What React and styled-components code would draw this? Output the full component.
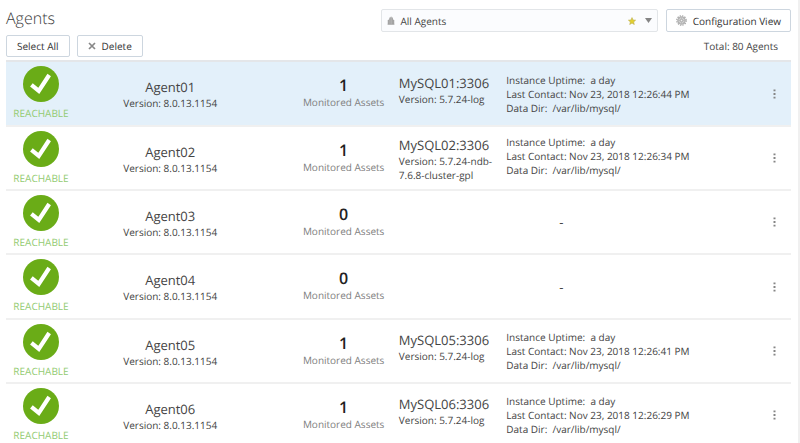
import React from "react";
import styled, { createGlobalStyle } from "styled-components";

const GlobalStyle = createGlobalStyle`
  * { box-sizing: border-box; }
  body {
    margin: 0;
    background: #fff;
    color: #444;
    font-family: "Open Sans", "Noto Sans", sans-serif;
    font-size: 10px;
    text-rendering: geometricPrecision;
  }
  button, select { font-family: inherit; text-rendering: inherit; }
`;

const Page = styled.main`
  height: 100vh;
  overflow: hidden;
  padding: 9px 7px 0 6px;
  border-right: 2px solid #f0f0f0;
`;

const Bar = styled.div`
  display: flex;
  align-items: center;
  gap: ${(p) => p.$gap};
  margin-bottom: 3px;
`;

const Title = styled.h1`
  flex: 1;
  align-self: flex-start;
  margin: 0;
  font-size: 16px;
  line-height: 18px;
  font-weight: 300;
  color: #3c3c3c;
`;

const Picker = styled.div`
  position: relative;
  width: 35.2%;
`;

const GroupSelect = styled.select`
  display: block;
  appearance: none;
  width: 100%;
  height: 23px;
  padding: 0 48px 0 18px;
  border: 1px solid #e2e5e8;
  border-radius: 2px;
  background: #fbfcfe;
  color: #444;
  font-size: 10px;
`;

const PickerIcon = styled.span`
  position: absolute;
  top: 0;
  bottom: 0;
  ${(p) => p.$side}: 6px;
  display: flex;
  align-items: center;
  gap: 9px;
  pointer-events: none;
`;

const Button = styled.button`
  display: inline-flex;
  align-items: center;
  justify-content: center;
  gap: 6px;
  height: ${(p) => (p.$tall ? "23px" : "22px")};
  padding: 0 ${(p) => (p.$tall ? "9px" : "10px")};
  border: 1px solid #cdd6df;
  border-radius: 2px;
  background: #fff;
  color: #333;
  font-size: 10px;
  white-space: nowrap;
`;

const Total = styled.span`
  margin-left: auto;
  padding-right: 13px;
  font-size: 10px;
`;

const Table = styled.table`
  width: 100%;
  table-layout: fixed;
  border-collapse: separate;
  border-spacing: 0;
  border-top: 2px solid #e4e6e9;
`;

const Row = styled.tr`
  height: 64px;
  background: ${(p) => (p.$selected ? "#e3f0fa" : "#fff")};
  &:nth-child(3n + 1) { height: 65px; }
`;

const Cell = styled.td`
  padding: ${(p) => p.$pad || "0"};
  border-bottom: 2px solid #f0f0f0;
  text-align: ${(p) => p.$align || "left"};
  vertical-align: ${(p) => p.$valign || "top"};
`;

const Col = styled.col`
  width: ${(p) => p.$width};
`;

const Status = styled.div`
  display: flex;
  flex-direction: column;
  align-items: center;
  gap: 4px;
  color: #93cb72;
  font-size: 10px;
  line-height: 14px;
`;

const Instance = styled.div`
  display: flex;
`;

const Server = styled.div`
  flex: 0 0 30%;
  padding: 1px 12px 0 0;
`;

const Name = styled.div`
  font-size: 13px;
  line-height: 18px;
`;

const Version = styled.div`
  font-size: 10px;
  line-height: 14px;
`;

const Count = styled.div`
  color: #222;
  font-size: 16px;
  font-weight: 600;
  line-height: 20px;
`;

const Caption = styled.div`
  color: #808080;
  font-size: 10px;
  line-height: 14px;
`;

const Detail = styled.div`
  font-size: 10px;
  line-height: 14px;
  white-space: pre;
`;

const Dash = styled.div`
  font-size: 13px;
  line-height: 18px;
`;

const MenuButton = styled.button`
  display: block;
  margin: 0 auto;
  padding: 0 6px;
  border: 0;
  background: none;
  line-height: 0;
`;

function CheckIcon() {
  return (
    <svg width="36" height="36" viewBox="0 0 36 36" aria-hidden="true">
      <circle cx="18" cy="18" r="18" fill="#6aac17" />
      <path d="M8.4 18.8 15.8 24.8 26.2 9" fill="none" stroke="#fff" strokeWidth="4.2" />
    </svg>
  );
}

function GroupIcon() {
  return (
    <svg width="8" height="9" viewBox="0 0 8 9" aria-hidden="true">
      <path d="M1 8.5V4L2.4 3V1.4L4.2.6 5.8 1.4V3L7 4v4.5z" fill="#bbb" />
      <path d="M3 2v6M5.2 2v6M1.2 4v4M6.8 4v4" stroke="#858585" strokeWidth=".6" />
      <path d="M.5 8.4h7" stroke="#999" strokeWidth=".6" />
    </svg>
  );
}

function StarIcon() {
  return (
    <svg width="8" height="8" viewBox="0 0 8 8" aria-hidden="true">
      <path
        d="M4 .6 5 3l2.6.2-2 1.7.7 2.6L4 6.1 1.7 7.5l.7-2.6-2-1.7L3 3z"
        fill="#e3d02e"
        stroke="#bcae49"
        strokeWidth=".6"
      />
    </svg>
  );
}

function ArrowIcon() {
  return (
    <svg width="7" height="5" viewBox="0 0 7 5" aria-hidden="true">
      <path d="M0 0h7L3.5 5z" fill="#858585" />
    </svg>
  );
}

function GearIcon() {
  return (
    <svg width="11" height="11" viewBox="0 0 11 11" aria-hidden="true">
      <circle cx="5.5" cy="5.5" r="4.7" fill="none" stroke="#a2a2a2" strokeWidth="1.2" strokeDasharray="1.4 1.06" />
      <circle cx="5.5" cy="5.5" r="3.8" fill="#d0d0d0" stroke="#a2a2a2" strokeWidth=".8" />
      <path d="M5.5 2v7M2 5.5h7M3 3l5 5M8 3 3 8" stroke="#aaa" strokeWidth=".5" />
      <circle cx="5.5" cy="5.5" r="1.2" fill="#eee" stroke="#999" strokeWidth=".6" />
    </svg>
  );
}

function CrossIcon() {
  return (
    <svg width="8" height="8" viewBox="0 0 8 8" aria-hidden="true">
      <path d="M1 1l6 6M7 1 1 7" stroke="#888" strokeWidth="1.7" />
    </svg>
  );
}

function DotsIcon() {
  return (
    <svg width="3" height="10" viewBox="0 0 3 10" aria-hidden="true">
      <path d="M.5 .5h2v1.8h-2zM.5 4.1h2v1.8h-2zM.5 7.7h2v1.8h-2z" fill="#858585" />
    </svg>
  );
}

const agents = [
  { name: "Agent01", server: "MySQL01:3306", version: "5.7.24-log", contact: "12:26:44", selected: true },
  { name: "Agent02", server: "MySQL02:3306", version: "5.7.24-ndb-7.6.8-cluster-gpl", contact: "12:26:34" },
  { name: "Agent03" },
  { name: "Agent04" },
  { name: "Agent05", server: "MySQL05:3306", version: "5.7.24-log", contact: "12:26:41" },
  { name: "Agent06", server: "MySQL06:3306", version: "5.7.24-log", contact: "12:26:29" },
];

function AgentRow({ agent }) {
  return (
    <Row $selected={agent.selected}>
      <Cell $pad="4px 0 0">
        <Status>
          <CheckIcon />
          REACHABLE
        </Status>
      </Cell>
      <Cell $align="center" $pad="16px 0 0">
        <Name>{agent.name}</Name>
        <Version>Version: 8.0.13.1154</Version>
      </Cell>
      <Cell $align="center" $pad="13px 0 0 25px">
        <Count>{agent.server ? 1 : 0}</Count>
        <Caption>Monitored Assets</Caption>
      </Cell>
      {agent.server ? (
        <Cell $valign="middle" $pad="0 0 0 1px">
          <Instance>
            <Server>
              <Name>{agent.server}</Name>
              <Version>Version: {agent.version}</Version>
            </Server>
            <div>
              <Detail>{"Instance Uptime:  a day"}</Detail>
              <Detail>{`Last Contact: Nov 23, 2018 ${agent.contact} PM`}</Detail>
              <Detail>{"Data Dir:  /var/lib/mysql/"}</Detail>
            </div>
          </Instance>
        </Cell>
      ) : (
        <Cell $align="center" $valign="middle" $pad="0 32px 0 0">
          <Dash>-</Dash>
        </Cell>
      )}
      <Cell $valign="middle">
        <MenuButton type="button" aria-label={`${agent.name} menu`}>
          <DotsIcon />
        </MenuButton>
      </Cell>
    </Row>
  );
}

export default function App() {
  return (
    <>
      <GlobalStyle />
      <Page>
        <Bar $gap="8px">
          <Title>Agents</Title>
          <Picker>
            <GroupSelect aria-label="Agent group" defaultValue="all">
              <option value="all">All Agents</option>
            </GroupSelect>
            <PickerIcon $side="left">
              <GroupIcon />
            </PickerIcon>
            <PickerIcon $side="right">
              <StarIcon />
              <ArrowIcon />
            </PickerIcon>
          </Picker>
          <Button type="button" $tall>
            <GearIcon />
            Configuration View
          </Button>
        </Bar>
        <Bar $gap="7px">
          <Button type="button">Select All</Button>
          <Button type="button">
            <CrossIcon />
            Delete
          </Button>
          <Total>Total: 80 Agents</Total>
        </Bar>
        <Table>
          <colgroup>
            <Col $width="70px" />
            <Col $width="24%" />
            <Col $width="17%" />
            <Col $width="auto" />
            <Col $width="34px" />
          </colgroup>
          <tbody>
            {agents.map((agent) => (
              <AgentRow key={agent.name} agent={agent} />
            ))}
          </tbody>
        </Table>
      </Page>
    </>
  );
}
